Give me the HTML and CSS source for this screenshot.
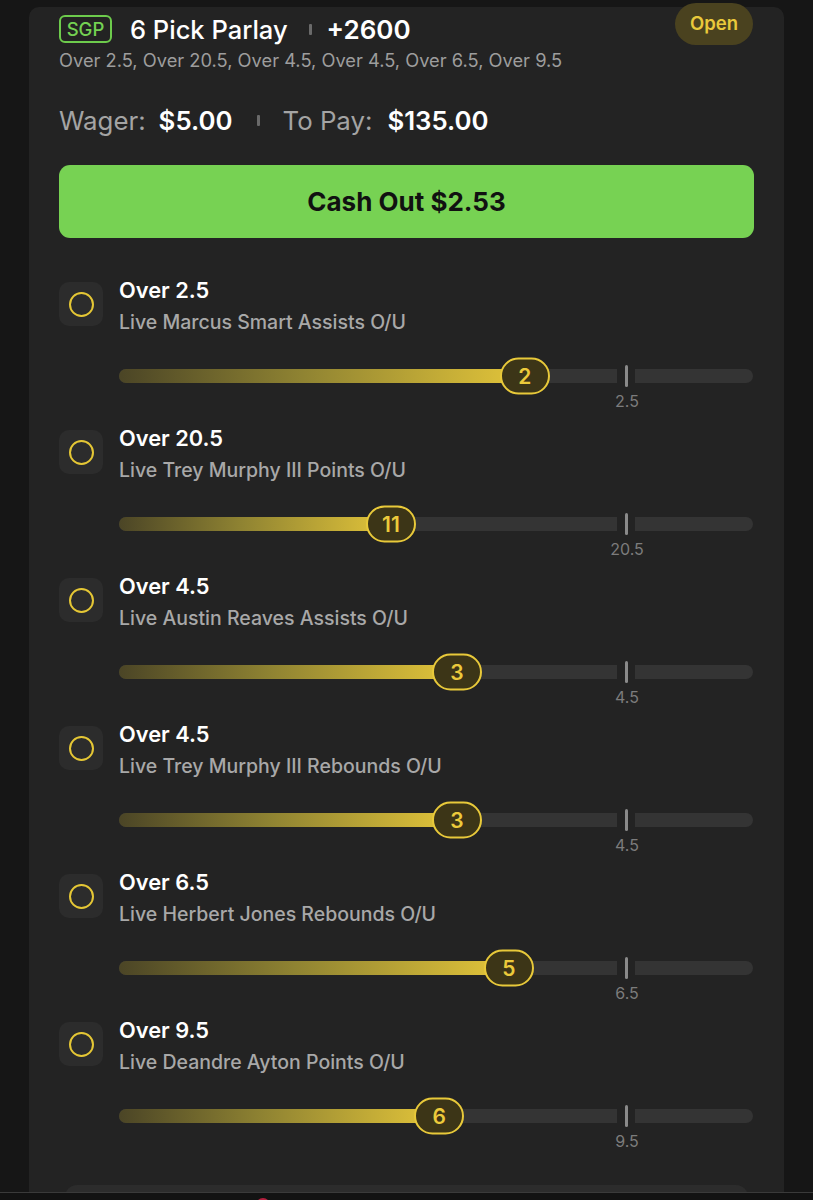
FILE: index.html
```html
<!DOCTYPE html>
<html lang="en">
<head>
<meta charset="utf-8">
<title>6 Pick Parlay</title>
<link rel="stylesheet" href="styles.css">
</head>
<body>
<div class="page">
  <div class="card">
    <div class="status">Open</div>
    <div class="title-row">
      <span class="badge">SGP</span>
      <span class="title">6 Pick Parlay</span>
      <span class="sep"></span>
      <span class="odds">+2600</span>
    </div>
    <div class="summary">Over 2.5, Over 20.5, Over 4.5, Over 4.5, Over 6.5, Over 9.5</div>

    <div class="wager-row">
      <span class="label">Wager:</span><span class="amount">$5.00</span>
      <span class="sep sep-lg"></span>
      <span class="label">To Pay:</span><span class="amount amount-lg">$135.00</span>
    </div>

    <button class="cashout">Cash Out $2.53</button>

    <div class="legs">
      <div class="leg">
        <div class="check"><span class="ring"></span></div>
        <div class="leg-body">
          <div class="leg-title">Over 2.5</div>
          <div class="leg-sub">Live Marcus Smart Assists O/U</div>
          <div class="track">
            <div class="fill" style="width:64%"></div>
            <div class="gap"><span class="tick"></span></div>
            <div class="knob" style="left:64%">2</div>
          </div>
          <div class="marks"><span class="mark">2.5</span></div>
        </div>
      </div>

      <div class="leg">
        <div class="check"><span class="ring"></span></div>
        <div class="leg-body">
          <div class="leg-title">Over 20.5</div>
          <div class="leg-sub">Live Trey Murphy III Points O/U</div>
          <div class="track">
            <div class="fill" style="width:42.9%"></div>
            <div class="gap"><span class="tick"></span></div>
            <div class="knob" style="left:42.9%">11</div>
          </div>
          <div class="marks"><span class="mark">20.5</span></div>
        </div>
      </div>

      <div class="leg">
        <div class="check"><span class="ring"></span></div>
        <div class="leg-body">
          <div class="leg-title">Over 4.5</div>
          <div class="leg-sub">Live Austin Reaves Assists O/U</div>
          <div class="track">
            <div class="fill" style="width:53.3%"></div>
            <div class="gap"><span class="tick"></span></div>
            <div class="knob" style="left:53.3%">3</div>
          </div>
          <div class="marks"><span class="mark">4.5</span></div>
        </div>
      </div>

      <div class="leg">
        <div class="check"><span class="ring"></span></div>
        <div class="leg-body">
          <div class="leg-title">Over 4.5</div>
          <div class="leg-sub">Live Trey Murphy III Rebounds O/U</div>
          <div class="track">
            <div class="fill" style="width:53.3%"></div>
            <div class="gap"><span class="tick"></span></div>
            <div class="knob" style="left:53.3%">3</div>
          </div>
          <div class="marks"><span class="mark">4.5</span></div>
        </div>
      </div>

      <div class="leg">
        <div class="check"><span class="ring"></span></div>
        <div class="leg-body">
          <div class="leg-title">Over 6.5</div>
          <div class="leg-sub">Live Herbert Jones Rebounds O/U</div>
          <div class="track">
            <div class="fill" style="width:61.5%"></div>
            <div class="gap"><span class="tick"></span></div>
            <div class="knob" style="left:61.5%">5</div>
          </div>
          <div class="marks"><span class="mark">6.5</span></div>
        </div>
      </div>

      <div class="leg">
        <div class="check"><span class="ring"></span></div>
        <div class="leg-body">
          <div class="leg-title">Over 9.5</div>
          <div class="leg-sub">Live Deandre Ayton Points O/U</div>
          <div class="track">
            <div class="fill" style="width:50.5%"></div>
            <div class="gap"><span class="tick"></span></div>
            <div class="knob" style="left:50.5%">6</div>
          </div>
          <div class="marks"><span class="mark">9.5</span></div>
        </div>
      </div>
    </div>

    <div class="next-btn"></div>
  </div>
  <div class="tabbar"><span class="dot"></span></div>
</div>
</body>
</html>
```

FILE: styles.css
```css
* { box-sizing: border-box; }

html, body {
  margin: 0;
  padding: 0;
  background: #161616;
}

body {
  font-family: Inter, "Noto Sans", "Liberation Sans", sans-serif;
  color: #fff;
}

.page {
  height: 1200px;
  overflow: hidden;
  display: flex;
  flex-direction: column;
  padding: 7px 29px 0;
}

.card {
  flex: 1;
  min-height: 0;
  position: relative;
  background: #232323;
  border-radius: 10px 10px 0 0;
  padding: 8px 30px 0;
}

.status {
  position: absolute;
  top: -4px;
  right: 31px;
  width: 78px;
  height: 42px;
  border-radius: 21px;
  background: #4a421f;
  color: #e9c93b;
  font-size: 18.5px;
  font-weight: 600;
  display: flex;
  align-items: center;
  justify-content: center;
  padding-bottom: 3px;
}

.title-row {
  display: flex;
  align-items: center;
  height: 28px;
}

.badge {
  display: flex;
  align-items: center;
  justify-content: center;
  width: 53px;
  height: 28px;
  border: 2px solid #6dcb4c;
  border-radius: 6px;
  color: #74d152;
  font-size: 18.5px;
  font-weight: 500;
}

.title {
  margin-left: 18px;
  font-size: 25.5px;
  font-weight: 500;
}

.sep {
  display: inline-block;
  width: 3px;
  height: 11px;
  border-radius: 1px;
  background: #6a6a6a;
  margin: 0 15px 0 21px;
}

.odds {
  font-size: 26px;
  font-weight: 600;
}

.summary {
  margin-top: 7px;
  font-size: 18.3px;
  line-height: 20px;
  color: #9d9d9d;
}

.wager-row {
  margin-top: 35px;
  height: 30px;
  display: flex;
  align-items: center;
  font-size: 25.8px;
}

.wager-row .label {
  color: #a4a4a4;
}

.wager-row .amount {
  margin-left: 13px;
  font-weight: 600;
  color: #fff;
}

.wager-row .amount-lg {
  margin-left: 15px;
}

.sep-lg {
  margin: 0 23px 0 24px;
}

.cashout {
  display: block;
  width: 100%;
  margin-top: 30px;
  height: 73px;
  border: none;
  border-radius: 11px;
  background: #77d253;
  color: #111;
  font-family: inherit;
  font-size: 26px;
  font-weight: 700;
}

.legs {
  margin-top: 40px;
  display: flex;
  flex-direction: column;
  gap: 16px;
}

.leg {
  display: grid;
  grid-template-columns: 44px 1fr;
  column-gap: 16px;
}

.check {
  margin-top: 4px;
  width: 44px;
  height: 44px;
  border-radius: 10px;
  background: #2c2c2c;
  display: flex;
  align-items: center;
  justify-content: center;
}

.ring {
  width: 25px;
  height: 25px;
  border-radius: 50%;
  border: 2px solid #e5c735;
}

.leg-title {
  font-size: 21.8px;
  line-height: 24px;
  font-weight: 600;
}

.leg-sub {
  margin-top: 9px;
  font-size: 19.5px;
  line-height: 22px;
  font-weight: 500;
  color: #a8a8a8;
}

.track {
  position: relative;
  margin-top: 36px;
  height: 14px;
  border-radius: 7px;
  background: #343434;
  margin-right: 1px;
}

.fill {
  position: absolute;
  left: 0;
  top: 0;
  bottom: 0;
  border-radius: 7px;
  background: linear-gradient(90deg, #4b4526 0%, #8f8332 45%, #e3c53a 100%);
}

.gap {
  position: absolute;
  left: 80%;
  top: -4px;
  width: 18px;
  height: 22px;
  transform: translateX(-50%);
  background: #232323;
  display: flex;
  justify-content: center;
}

.tick {
  width: 3px;
  height: 22px;
  border-radius: 1.5px;
  background: #8a8a8a;
}

.knob {
  position: absolute;
  top: 50%;
  width: 50px;
  height: 37px;
  transform: translate(-50%, -50%);
  border: 2px solid #e8c93a;
  border-radius: 18.5px;
  background: #3c3517;
  color: #ecca3b;
  font-size: 21px;
  font-weight: 600;
  display: flex;
  align-items: center;
  justify-content: center;
}

.marks {
  position: relative;
  height: 18px;
  margin-top: 9px;
}

.mark {
  position: absolute;
  left: 80%;
  top: 0;
  transform: translateX(-50%);
  font-size: 16px;
  line-height: 18px;
  color: #7c7c7c;
}

.next-btn {
  margin: 35px 6px 0;
  height: 50px;
  border-radius: 12px;
  background: #2c2c2c;
}

.tabbar {
  flex: none;
  height: 8px;
  margin: 0 -29px;
  border-top: 1px solid #3a3a3a;
  background: #121212;
  position: relative;
  z-index: 2;
  padding-left: 256px;
  padding-top: 5px;
  overflow: hidden;
}

.dot {
  display: block;
  width: 14px;
  height: 14px;
  border-radius: 50%;
  background: #b4203f;
}
```
